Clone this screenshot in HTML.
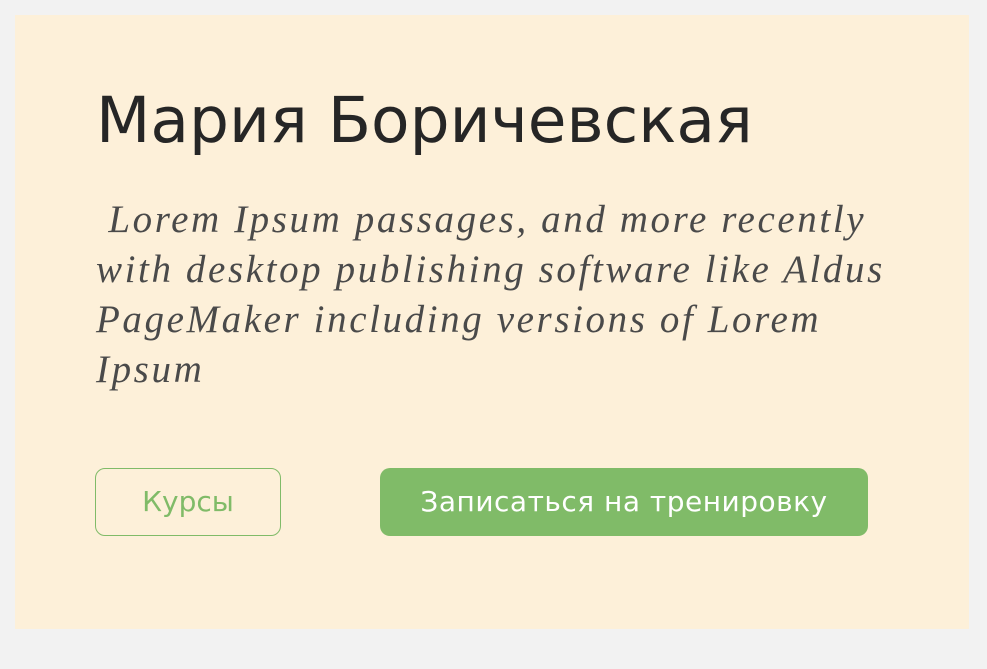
<!DOCTYPE html>
<html><head><meta charset="utf-8"><style>
html,body{margin:0;padding:0;background:#f2f2f2;width:987px;height:669px;overflow:hidden}
.card{position:absolute;left:15px;top:15px;width:954px;height:614px;background:#fdf0d9}
h1{position:absolute;left:81px;top:68px;margin:0;font:400 63px/1.2 "DejaVu Sans","Liberation Sans",sans-serif;color:#262626;letter-spacing:0px;white-space:nowrap}
p{position:absolute;left:81px;top:180px;margin:0;font:italic 39px/50px "Liberation Serif",serif;color:#4a4a4a;letter-spacing:2.6px;white-space:nowrap}
.b1{position:absolute;left:80px;top:453px;width:186px;height:68px;border:1px solid #80bb68;border-radius:10px;box-sizing:border-box;color:#80bb68;font:28px/66px "DejaVu Sans","Liberation Sans",sans-serif;text-align:center}
.b2{position:absolute;left:365px;top:453px;width:488px;height:68px;background:#80bb68;border-radius:10px;color:#fff;font:28px/68px "DejaVu Sans","Liberation Sans",sans-serif;letter-spacing:0.5px;text-align:center}
</style></head><body>
<div class="card">
<h1>Мария Боричевская</h1>
<p>&nbsp;Lorem Ipsum passages, and more recently<br>with desktop publishing software like Aldus<br>PageMaker including versions of Lorem<br>Ipsum</p>
<div class="b1">Курсы</div>
<div class="b2">Записаться на тренировку</div>
</div>
</body></html>
